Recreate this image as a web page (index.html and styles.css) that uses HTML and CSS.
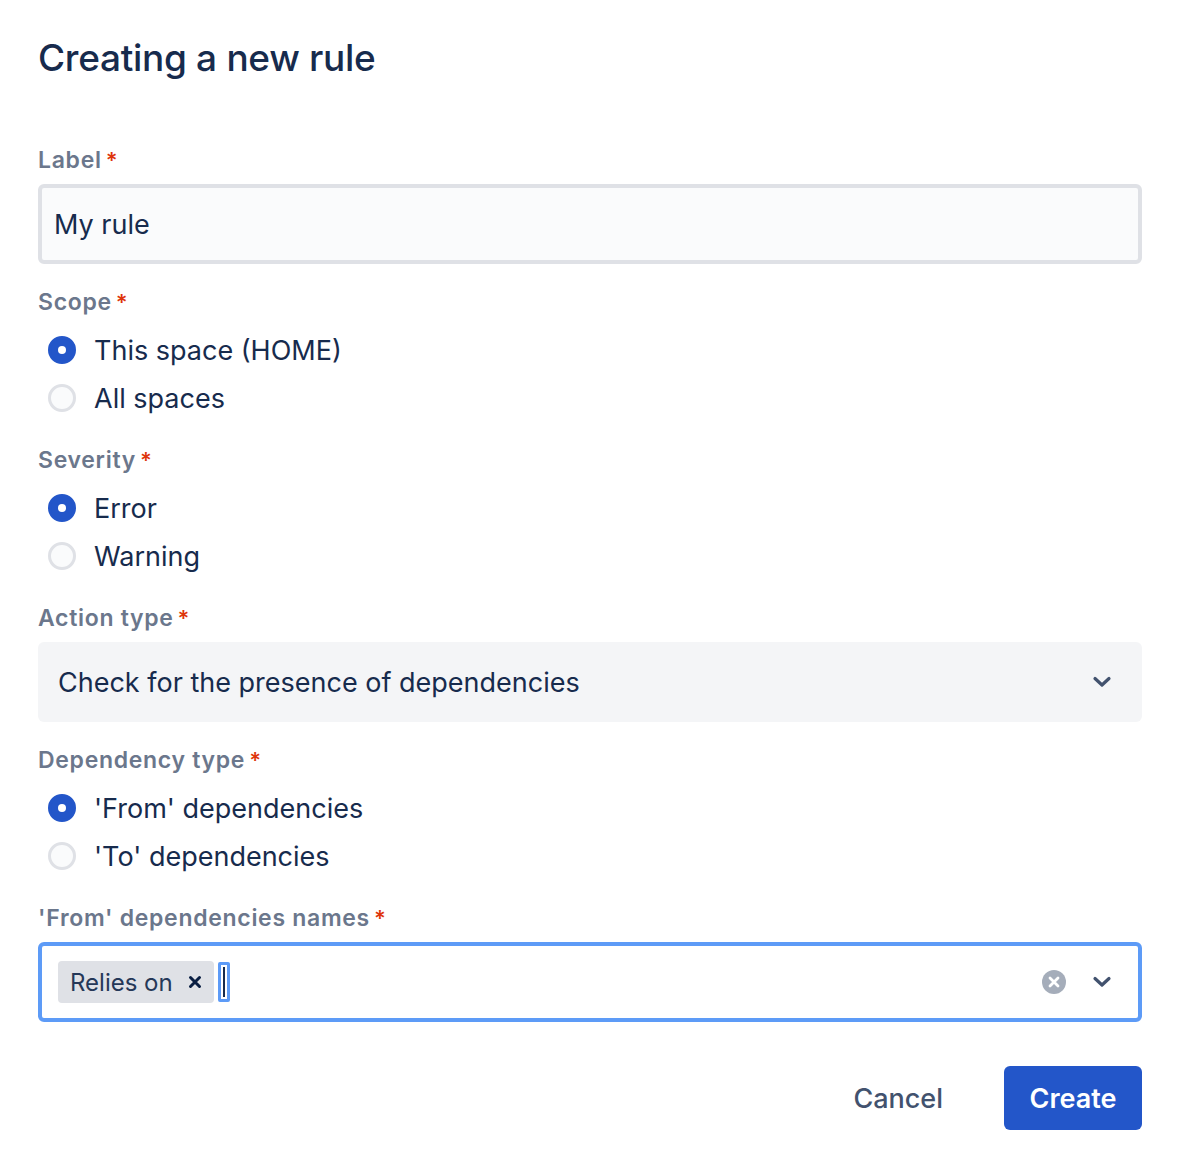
FILE: index.html
```html
<!DOCTYPE html>
<html lang="en">
<head>
<meta charset="utf-8">
<title>Creating a new rule</title>
<link rel="stylesheet" href="styles.css">
</head>
<body>
<div class="dialog">
  <h1 class="title">Creating a new rule</h1>

  <div class="field first">
    <div class="label">Label<span class="req">*</span></div>
    <div class="textinput">My rule</div>
  </div>

  <div class="field">
    <div class="label">Scope<span class="req">*</span></div>
    <div class="radios">
      <div class="radio-row"><span class="radio checked"></span><span class="radio-text">This space (HOME)</span></div>
      <div class="radio-row"><span class="radio"></span><span class="radio-text">All spaces</span></div>
    </div>
  </div>

  <div class="field">
    <div class="label">Severity<span class="req">*</span></div>
    <div class="radios">
      <div class="radio-row"><span class="radio checked"></span><span class="radio-text">Error</span></div>
      <div class="radio-row"><span class="radio"></span><span class="radio-text">Warning</span></div>
    </div>
  </div>

  <div class="field">
    <div class="label">Action type<span class="req">*</span></div>
    <div class="select">
      <span class="select-value">Check for the presence of dependencies</span>
      <span class="chevron">
        <svg width="20" height="12" viewBox="0 0 20 12"><path d="M3 2.5 L10 9 L17 2.5" fill="none" stroke="#42526E" stroke-width="3.2" stroke-linecap="round" stroke-linejoin="round"/></svg>
      </span>
    </div>
  </div>

  <div class="field">
    <div class="label">Dependency type<span class="req">*</span></div>
    <div class="radios">
      <div class="radio-row"><span class="radio checked"></span><span class="radio-text">'From' dependencies</span></div>
      <div class="radio-row"><span class="radio"></span><span class="radio-text">'To' dependencies</span></div>
    </div>
  </div>

  <div class="field">
    <div class="label">'From' dependencies names<span class="req">*</span></div>
    <div class="multiselect">
      <div class="values">
        <span class="tag"><span class="tag-text">Relies on</span><span class="tag-x">
          <svg width="14" height="14" viewBox="0 0 14 14"><path d="M2.5 2.5 L11.5 11.5 M11.5 2.5 L2.5 11.5" stroke="#091E42" stroke-width="3" stroke-linecap="round"/></svg>
        </span></span>
        <span class="caret-box"><span class="caret"></span></span>
      </div>
      <span class="clear">
        <svg width="26" height="26" viewBox="0 0 26 26"><circle cx="13" cy="13" r="12" fill="#A5ADBA"/><path d="M9 9 L17 17 M17 9 L9 17" stroke="#fff" stroke-width="2.8" stroke-linecap="round"/></svg>
      </span>
      <span class="chevron">
        <svg width="20" height="12" viewBox="0 0 20 12"><path d="M3 2.5 L10 9 L17 2.5" fill="none" stroke="#42526E" stroke-width="3.2" stroke-linecap="round" stroke-linejoin="round"/></svg>
      </span>
    </div>
  </div>

  <div class="actions">
    <button class="btn btn-subtle">Cancel</button>
    <button class="btn btn-primary">Create</button>
  </div>
</div>
</body>
</html>
```

FILE: styles.css
```css
* { box-sizing: border-box; }
html, body { margin: 0; padding: 0; background: #ffffff; }
body {
  font-family: Inter, "Noto Sans", "Liberation Sans", sans-serif;
  color: #172B4D;
}
.dialog {
  width: 1182px;
  padding: 34px 40px 0 38px;
}
.title {
  margin: 0;
  font-size: 37px;
  font-weight: 500;
  line-height: 48px;
  letter-spacing: -0.3px;
  color: #172B4D;
}
.field { margin-top: 21px; }
.field.first { margin-top: 61px; }
.label {
  height: 32px;
  font-size: 23px;
  line-height: 35px;
  font-weight: 600;
  letter-spacing: 0.7px;
  color: #6B778C;
  margin-bottom: 9px;
  white-space: nowrap;
}
.req {
  color: #DE350B;
  margin-left: 4px;
  font-size: 22px;
  line-height: 35px;
}
.textinput {
  height: 80px;
  border: 4px solid #DFE1E6;
  border-radius: 6px;
  background: #FAFBFC;
  padding: 0 12px;
  display: flex;
  align-items: center;
  font-size: 27px;
  color: #172B4D;
}
.radios { display: flex; flex-direction: column; }
.radio-row {
  height: 48px;
  display: flex;
  align-items: center;
  padding-left: 10px;
}
.radio {
  width: 28px;
  height: 28px;
  border-radius: 50%;
  border: 3px solid #DFE1E6;
  background: #FAFBFC;
  flex: none;
  display: flex;
  align-items: center;
  justify-content: center;
}
.radio.checked {
  border-color: #2356C9;
  background: #2356C9;
}
.radio.checked::after {
  content: "";
  width: 8px;
  height: 8px;
  border-radius: 50%;
  background: #ffffff;
}
.radio-text {
  margin-left: 18px;
  font-size: 27px;
  color: #172B4D;
}
.select {
  height: 80px;
  border-radius: 6px;
  background: #F4F5F7;
  display: flex;
  align-items: center;
  padding: 0 30px 0 20px;
}
.select-value {
  flex: 1;
  font-size: 27px;
  color: #172B4D;
}
.chevron {
  width: 20px;
  height: 12px;
  display: flex;
}
.multiselect {
  height: 80px;
  border: 4px solid #5D9BF7;
  border-radius: 6px;
  background: #ffffff;
  display: flex;
  align-items: center;
  padding: 0 26px 0 16px;
}
.values {
  flex: 1;
  display: flex;
  align-items: center;
}
.tag {
  height: 42px;
  background: #DFE1E6;
  border-radius: 4px;
  display: flex;
  align-items: center;
  padding: 0 12px 0 12px;
  width: 156px;
}
.tag-text {
  font-size: 24px;
  color: #253858;
  flex: 1;
}
.tag-x { display: flex; }
.caret-box {
  margin-left: 4px;
  width: 12px;
  height: 40px;
  border: 3px solid #5D9BF7;
  border-radius: 2px;
  display: flex;
  align-items: center;
  justify-content: center;
}
.caret {
  width: 2px;
  height: 30px;
  background: #172B4D;
}
.clear {
  display: flex;
  margin-right: 25px;
}
.actions {
  margin-top: 44px;
  display: flex;
  justify-content: flex-end;
  align-items: center;
  gap: 36px;
}
.btn {
  font-family: Inter, "Noto Sans", "Liberation Sans", sans-serif;
  font-size: 27px;
  height: 64px;
  border: none;
  border-radius: 6px;
  padding: 0 25px;
  cursor: pointer;
}
.btn-subtle {
  background: transparent;
  color: #42526E;
  font-weight: 500;
}
.btn-primary {
  background: #2356C9;
  color: #ffffff;
  font-weight: 600;
  width: 138px;
  padding: 0;
}
```
